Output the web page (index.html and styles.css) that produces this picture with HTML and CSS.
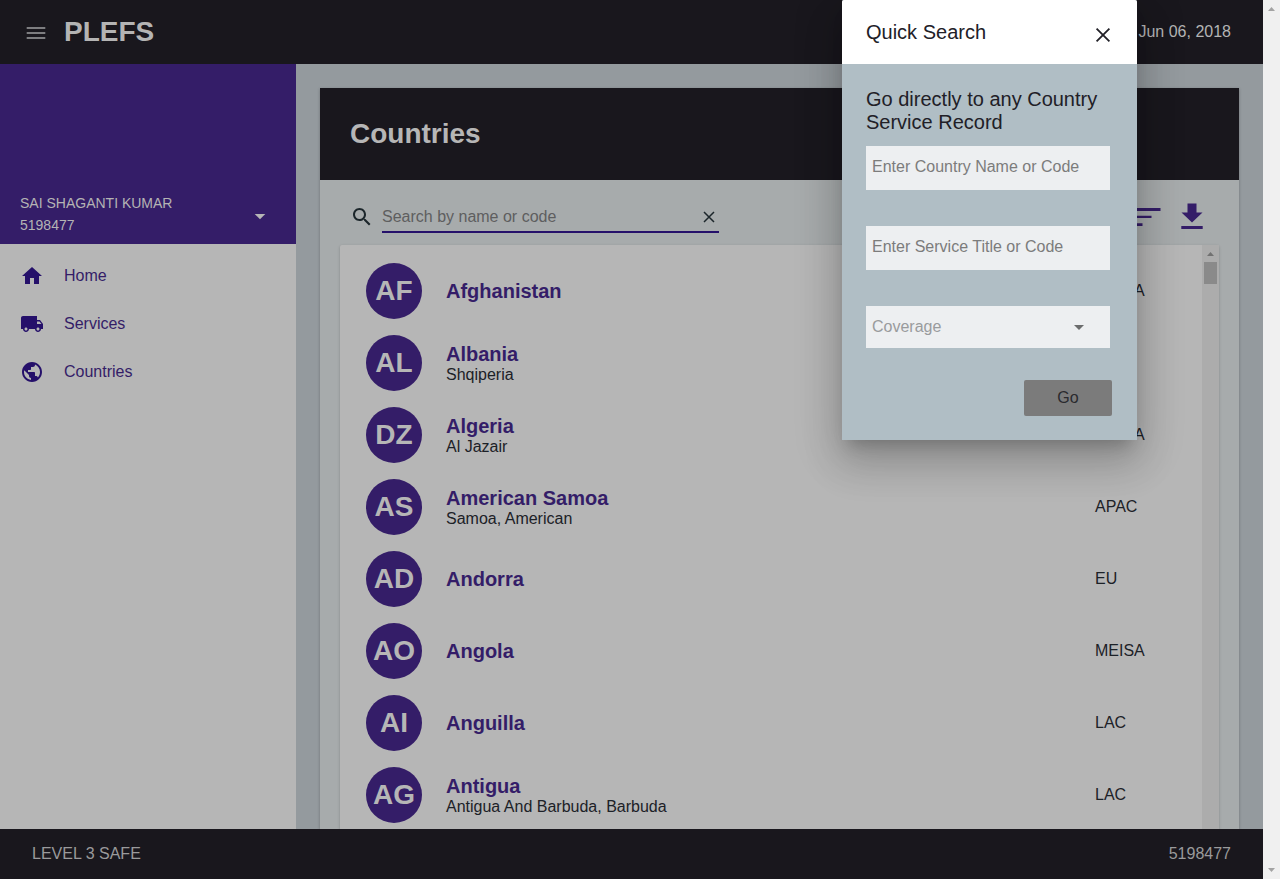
FILE: index.html
```html
<!DOCTYPE html>
<html lang="en">
<head>
<meta charset="utf-8">
<title>PLEFS - Countries</title>
<link rel="stylesheet" href="styles.css">
</head>
<body>
<div class="window">
  <div class="app">
    <header class="topbar">
      <svg class="menu-icon" width="24" height="24" viewBox="0 0 24 24"><path d="M2.700 6h18.600v2H2.700zM2.700 11h18.600v2H2.700zM2.700 16h18.600v2H2.700z"/></svg>
      <h1 class="brand">PLEFS</h1>
      <span class="date">Jun 06, 2018</span>
    </header>
    <div class="body">
      <aside class="sidebar">
        <div class="profile">
          <div>SAI SHAGANTI KUMAR<br>5198477</div>
          <svg class="caret" width="24" height="24" viewBox="0 0 24 24"><path d="M6.700 10h10.600L12 15.200z"/></svg>
        </div>
        <nav class="nav">
          <a class="nav-item"><svg width="24" height="24" viewBox="0 0 24 24"><path d="M10 20v-6h4v6h5v-8h3L12 3 2 12h3v8z"/></svg>Home</a>
          <a class="nav-item"><svg width="24" height="24" viewBox="0 0 24 24"><path d="M20 8h-3V4H3c-1.100 0-2 .9-2 2v11h2c0 1.660 1.340 3 3 3s3-1.340 3-3h6c0 1.660 1.340 3 3 3s3-1.340 3-3h2v-5l-3-4zM6 18.500c-.83 0-1.500-.67-1.500-1.500s.67-1.500 1.500-1.500 1.500.67 1.500 1.500-.67 1.500-1.500 1.500zm13.500-9l1.960 2.500H17V9.500h2.500zm-1.500 9c-.83 0-1.500-.67-1.500-1.500s.67-1.500 1.500-1.500 1.500.67 1.500 1.500-.67 1.500-1.500 1.500z"/></svg>Services</a>
          <a class="nav-item"><svg width="24" height="24" viewBox="0 0 24 24"><path d="M12 2C6.480 2 2 6.480 2 12s4.480 10 10 10 10-4.480 10-10S17.520 2 12 2zm-1 17.930c-3.950-.49-7-3.850-7-7.930 0-.62.080-1.210.21-1.790L9 15v1c0 1.100.9 2 2 2v1.930zm6.900-2.540c-.26-.81-1-1.390-1.900-1.390h-1v-3c0-.55-.45-1-1-1H8v-2h2c.55 0 1-.45 1-1V7h2c1.100 0 2-.9 2-2v-.41c2.930 1.190 5 4.060 5 7.410 0 2.080-.8 3.970-2.100 5.390z"/></svg>Countries</a>
        </nav>
      </aside>
      <main class="main">
        <section class="card">
          <h2 class="card-title">Countries</h2>
          <div class="toolbar">
            <svg class="search-icon" width="24" height="24" viewBox="0 0 24 24"><path d="M15.500 14h-.79l-.28-.27C15.410 12.590 16 11.110 16 9.500 16 5.910 13.090 3 9.500 3S3 5.910 3 9.500 5.910 16 9.500 16c1.610 0 3.090-.59 4.230-1.570l.27.28v.79l5 4.990L20.490 19l-4.990-5zm-6 0C7.010 14 5 11.990 5 9.500S7.010 5 9.500 5 14 7.010 14 9.500 11.990 14 9.500 14z"/></svg>
            <div class="search-field"><span>Search by name or code</span>
              <svg class="cross" width="20" height="20" viewBox="0 0 20 20"><path d="M5 5l10 10M15 5L5 15"/></svg>
            </div>
            <div class="actions">
              <svg width="36" height="36" viewBox="0 0 36 36"><path d="M4 8h30.500v3H4zM4 15.700h21.500V18H4zM4 23.200h12.500V26H4z"/></svg>
              <svg width="36" height="36" viewBox="0 0 36 36"><path d="M13.500 3.500h9v9h6L18 22.500 7.500 12.500h6zM7.300 26h21.400v3H7.300z"/></svg>
            </div>
          </div>
          <div class="list">
            <div class="rows">
              <div class="row"><b class="avatar">AF</b><div class="names"><b>Afghanistan</b></div><span class="region">MEISA</span></div>
              <div class="row"><b class="avatar">AL</b><div class="names"><b>Albania</b><span>Shqiperia</span></div><span class="region">EU</span></div>
              <div class="row"><b class="avatar">DZ</b><div class="names"><b>Algeria</b><span>Al Jazair</span></div><span class="region">MEISA</span></div>
              <div class="row"><b class="avatar">AS</b><div class="names"><b>American Samoa</b><span>Samoa, American</span></div><span class="region">APAC</span></div>
              <div class="row"><b class="avatar">AD</b><div class="names"><b>Andorra</b></div><span class="region">EU</span></div>
              <div class="row"><b class="avatar">AO</b><div class="names"><b>Angola</b></div><span class="region">MEISA</span></div>
              <div class="row"><b class="avatar">AI</b><div class="names"><b>Anguilla</b></div><span class="region">LAC</span></div>
              <div class="row"><b class="avatar">AG</b><div class="names"><b>Antigua</b><span>Antigua And Barbuda, Barbuda</span></div><span class="region">LAC</span></div>
            </div>
            <div class="list-scroll">
              <svg width="7" height="4" viewBox="0 0 7 4"><path d="M0 4L3.500 0 7 4z"/></svg>
              <div class="thumb"></div>
            </div>
          </div>
        </section>
      </main>
    </div>
    <footer class="footer"><span>LEVEL 3 SAFE</span><span>5198477</span></footer>
  </div>
  <div class="page-scroll">
    <svg width="7" height="4" viewBox="0 0 7 4"><path d="M0 4L3.500 0 7 4z"/></svg>
    <svg width="7" height="4" viewBox="0 0 7 4"><path d="M0 0L3.500 4 7 0z"/></svg>
  </div>
  <div class="dialog">
    <div class="dialog-head"><span>Quick Search</span>
      <svg class="cross" width="24" height="24" viewBox="0 0 24 24"><path d="M5.600 5.600l12.800 12.800M18.400 5.600L5.600 18.400"/></svg>
    </div>
    <div class="dialog-body">
      <p class="lead">Go directly to any Country Service Record</p>
      <div class="field">Enter Country Name or Code</div>
      <div class="field">Enter Service Title or Code</div>
      <div class="field select"><span>Coverage</span><svg width="10" height="5" viewBox="0 0 10 5"><path d="M0 0h10L5 5z"/></svg></div>
      <button class="go">Go</button>
    </div>
  </div>
</div>
</body>
</html>
```

FILE: styles.css
```css
* { box-sizing: border-box; }
body { margin: 0; font: 16px/20px "Liberation Sans", Arial, sans-serif; color: #1c2127; }
svg { display: block; flex: none; }
h1, h2, p { margin: 0; }
.window { position: relative; display: flex; width: 1280px; height: 879px; overflow: hidden; }
.app { flex: 1; display: flex; flex-direction: column; min-width: 0; }

.topbar { height: 64px; flex: none; display: flex; align-items: center; padding: 0 32px 0 24px; background: #19171d; color: #b4b4b4; }
.menu-icon { fill: #7d7d80; margin-top: 2px; }
.brand { margin-left: 16px; font-size: 28px; line-height: 32px; }
.date { margin-left: auto; }

.body { flex: 1; display: flex; min-height: 0; background: #949a9e; }
.sidebar { width: 296px; flex: none; background: #b6b6b6; }
.profile { height: 180px; padding: 0 24px 8px 20px; display: flex; align-items: flex-end; justify-content: space-between; background: #341d68; color: #b4b4b4; font-size: 14px; line-height: 22px; }
.caret { fill: #b6b6b6; margin-bottom: 8px; }
.nav { padding-top: 8px; }
.nav-item { display: flex; align-items: center; gap: 20px; height: 48px; padding: 0 20px; color: #341d68; }
.nav-item svg { fill: #25106a; }

.main { flex: 1; min-width: 0; padding: 24px 24px 0; display: flex; }
.card { flex: 1; min-width: 0; display: flex; flex-direction: column; background: #a7abac; box-shadow: 0 1px 3px rgba(0,0,0,.25); }
.card-title { height: 92px; flex: none; padding: 30px 30px 0; background: #19171d; color: #b6b6b6; font-size: 28px; line-height: 32px; }
.toolbar { height: 65px; flex: none; display: flex; align-items: flex-start; padding: 20px 29px 0 30px; }
.search-icon { fill: #1c262b; margin-top: 5px; }
.search-field { width: 337px; height: 33px; margin-left: 8px; padding-top: 2px; display: flex; align-items: center; justify-content: space-between; border-bottom: 2px solid #25106a; color: #5e5e5f; }
.cross { fill: none; stroke: #1c262b; stroke-width: 1.5; }
.actions { margin-left: auto; display: flex; gap: 12px; fill: #341d68; }
.list { flex: 1; min-height: 0; margin: 0 20px; display: flex; background: #b6b6b6; border-radius: 2px 2px 0 0; box-shadow: 0 1px 3px rgba(0,0,0,.22); }
.rows { flex: 1; padding-top: 10px; }
.row { display: flex; align-items: center; height: 72px; padding-left: 26px; }
.avatar { width: 56px; height: 56px; flex: none; border-radius: 50%; background: #341d68; color: #b6b6b6; font-size: 28px; line-height: 55px; text-align: center; }
.names { width: 673px; padding-left: 24px; display: flex; flex-direction: column; }
.names b { font-size: 20px; line-height: 22px; color: #341d68; }
.names span { line-height: 18px; padding-top: 1px; margin-bottom: -1px; }
.region { padding-bottom: 1px; }
.list-scroll { width: 17px; padding-top: 7px; display: flex; flex-direction: column; align-items: center; gap: 6px; background: #acacac; fill: #717171; }
.thumb { width: 13px; height: 22px; background: #8a8a8a; }

.footer { height: 50px; flex: none; padding: 0 32px; display: flex; align-items: center; justify-content: space-between; background: #19171d; color: #9a9a9b; }
.page-scroll { width: 17px; padding: 7px 0; display: flex; flex-direction: column; align-items: center; justify-content: space-between; background: #f0f0f0; fill: #a3a3a3; }

.dialog { position: absolute; left: 842px; top: 0; width: 295px; height: 440px; background: #b0bec5; border-radius: 2px 2px 0 0; color: #212027; box-shadow: 0 11px 15px -7px rgba(0,0,0,.2), 0 24px 38px 3px rgba(0,0,0,.14), 0 9px 46px 8px rgba(0,0,0,.12); }
.dialog-head { height: 64px; padding: 0 22px 0 24px; display: flex; align-items: center; justify-content: space-between; background: #fff; border-radius: 2px 2px 0 0; font-size: 20px; }
.dialog-head .cross { stroke: #212027; stroke-width: 1.8; margin-top: 6px; }
.dialog-body { padding: 24px 27px 0 24px; display: flex; flex-direction: column; }
.lead { font-size: 20px; line-height: 23px; margin-bottom: 12px; }
.field { height: 44px; margin-bottom: 36px; padding: 11px 6px; background: #edeff1; color: #7c7c7c; }
.select { height: 42px; margin-bottom: 32px; padding-right: 26px; display: flex; align-items: center; justify-content: space-between; color: #999b9d; fill: #6b6c6d; }
.go { width: 88px; height: 36px; align-self: flex-end; margin-right: -2px; padding: 0 0 1px; border: 0; border-radius: 2px; background: #7b7b7b; color: #2a2a2e; font: inherit; }
```
